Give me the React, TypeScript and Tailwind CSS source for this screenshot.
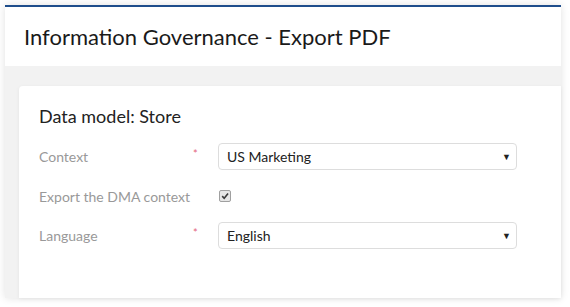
export default function App() {
  return (
    <div className="h-[307px] w-[570px] bg-white pl-[5px] pt-[5px] font-['Lato',sans-serif]">
      <div className="flex h-[293px] w-[556px] flex-col border-t-2 border-[#1f4e8c] bg-[#f2f2f2] shadow-[0_0_8px_rgba(0,0,0,0.12)]">
        <div className="flex h-[59px] items-center bg-white pl-[19px]">
          <h1 className="text-[22px] text-[#1a1a1a]">Information Governance - Export PDF</h1>
        </div>
        <div className="flex-1 pl-[14px] pt-[20px]">
          <div className="h-full rounded-tl-[4px] bg-white pl-[20px] pt-[19px] shadow-[0_1px_4px_rgba(0,0,0,0.06)]">
            <h2 className="text-[18px] leading-[22px] text-[#222]">Data model: Store</h2>
            <div className="mt-[16px] flex flex-col gap-[12px] text-[14px]">
              <Row label="Context" required>
                <Select value="US Marketing" />
              </Row>
              <Row label="Export the DMA context" tall>
                <span className="ml-[1px] flex h-[12px] w-[12px] items-center justify-center rounded-[2px] border border-[#a0a0a0] bg-[#e6e6e6]">
                  <svg viewBox="0 0 10 10" className="h-[8px] w-[8px]">
                    <path d="M1.5 5.2 L4 7.8 L8.8 2" fill="none" stroke="#3a3a3a" strokeWidth="2" />
                  </svg>
                </span>
              </Row>
              <Row label="Language" required>
                <Select value="English" />
              </Row>
            </div>
          </div>
        </div>
      </div>
    </div>
  )
}

function Row({ label, required, tall, children }: { label: string; required?: boolean; tall?: boolean; children: React.ReactNode }) {
  return (
    <div className={tall ? 'flex h-[28px] items-center' : 'flex h-[27px] items-center'}>
      <span className="w-[154px] text-[#999]">{label}</span>
      <span className="w-[25px] self-start pt-[3px] text-[11px] text-[#e3627a]">{required ? '*' : ''}</span>
      {children}
    </div>
  )
}

function Select({ value }: { value: string }) {
  return (
    <div className="flex h-[27px] w-[299px] items-center justify-between rounded-[4px] border border-[#ddd] pl-[8px] pr-[5px] text-[#222]">
      <span>{value}</span>
      <span className="text-[9px] text-[#222]">▼</span>
    </div>
  )
}
